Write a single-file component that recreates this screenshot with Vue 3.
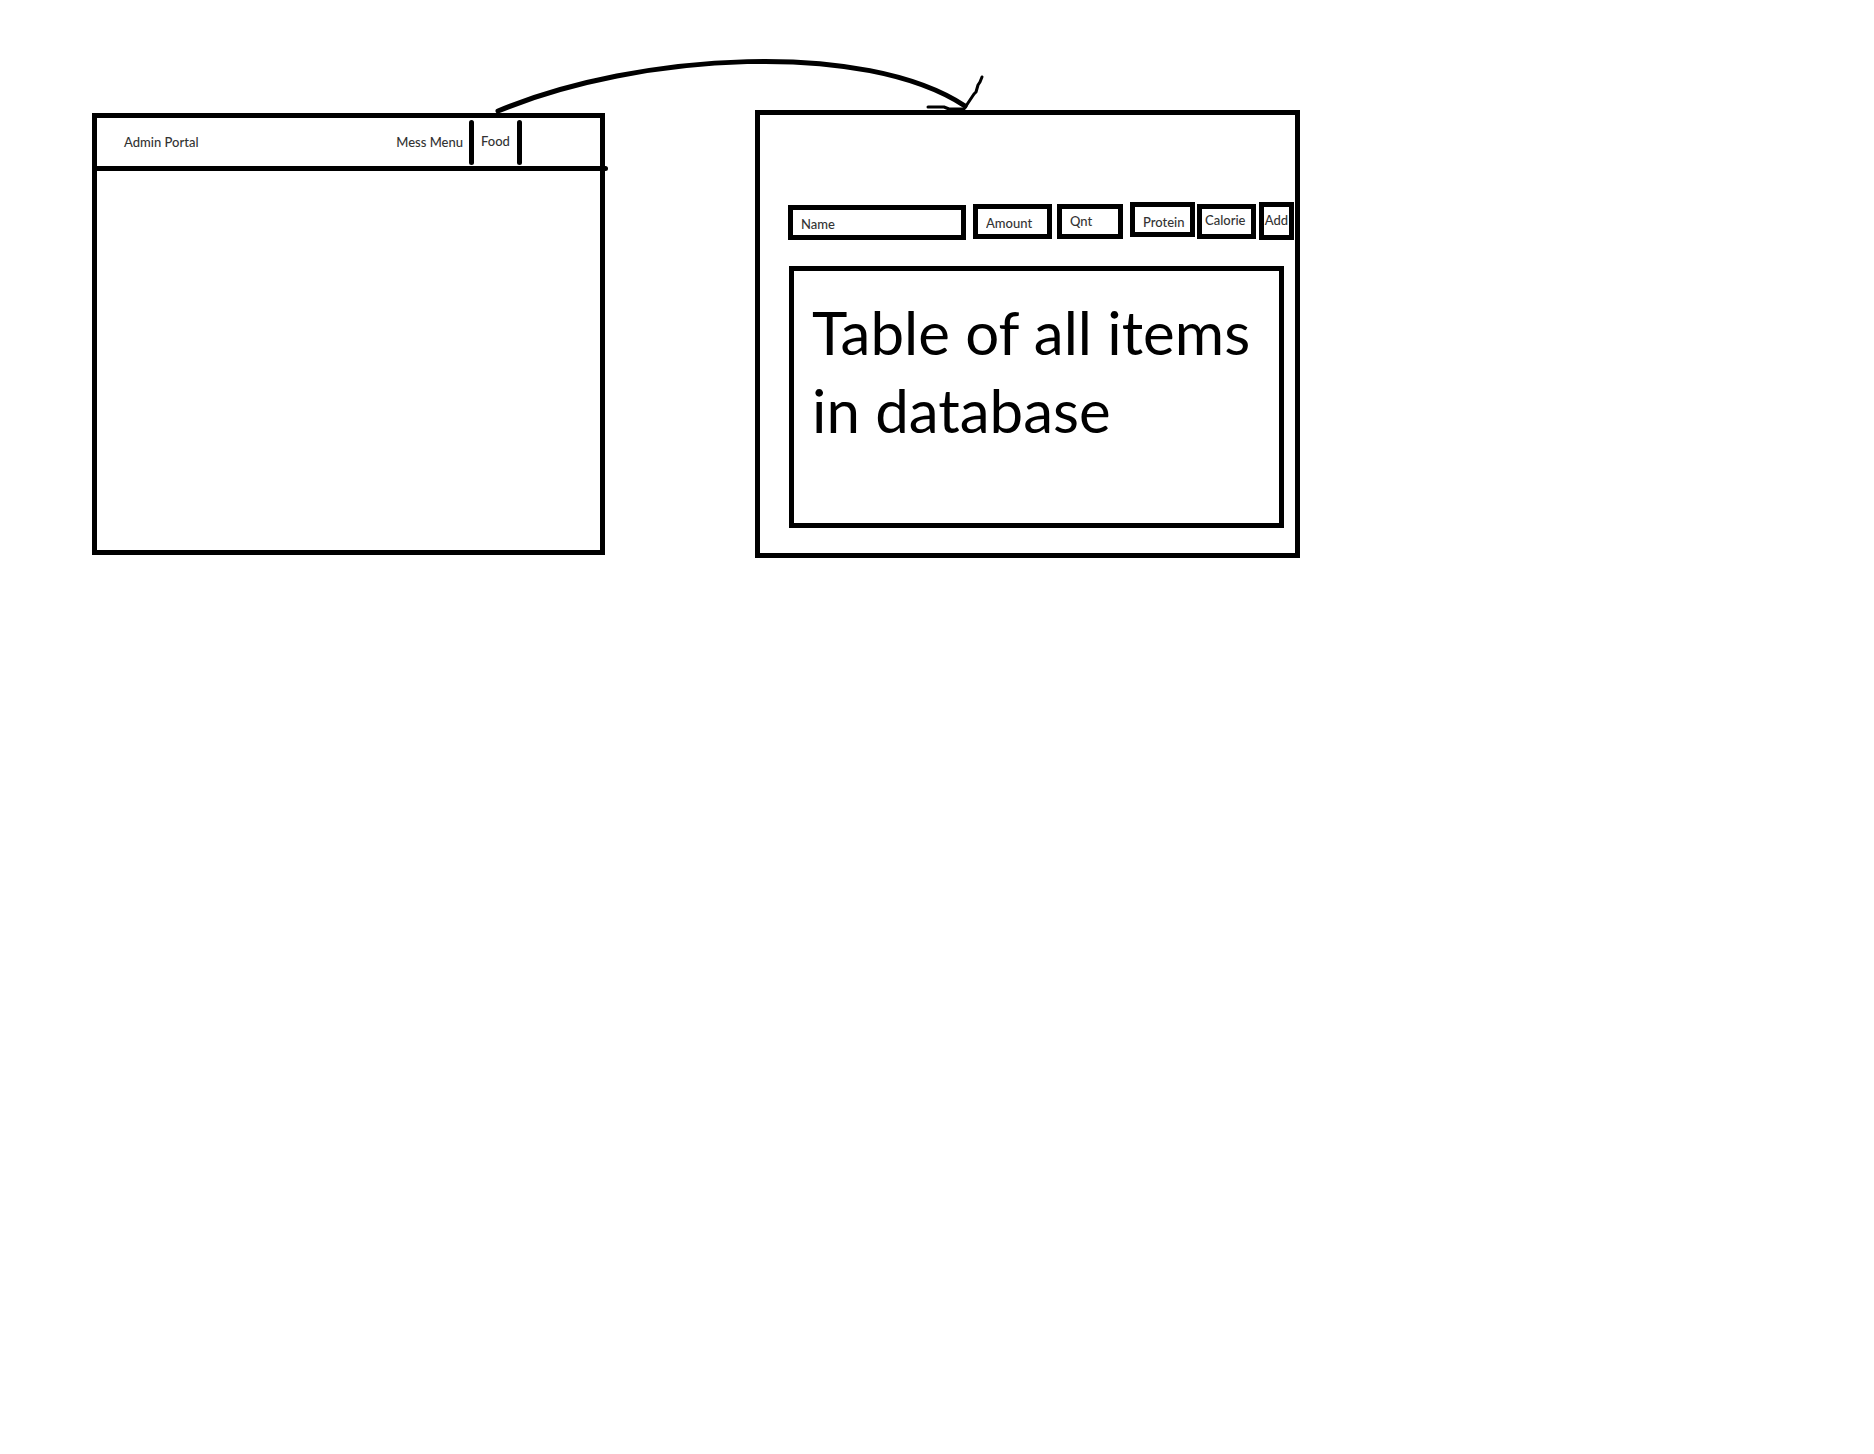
<script setup>
const fields = [
  { id: 'name', label: 'Name', kind: 'field-name low' },
  { id: 'amount', label: 'Amount', kind: 'field-amount low' },
  { id: 'qnt', label: 'Qnt', kind: 'field-qnt' },
  { id: 'protein', label: 'Protein', kind: 'field-protein' },
  { id: 'calorie', label: 'Calorie', kind: 'field-calorie' },
]
</script>

<template>
  <main class="board">
    <svg class="arrow" viewBox="0 0 1874 130" preserveAspectRatio="none" aria-hidden="true">
      <path class="curve" d="M498 111C640 52 865 40 965 106" />
      <path class="tip" d="M928 107H944L949 109H964L974 94L976 92L978 85L980 82L982 77" />
    </svg>

    <section class="panel portal">
      <header class="bar">
        <span class="brand">Admin Portal</span>
        <nav class="nav">
          <a href="#mess-menu">Mess Menu</a>
          <a href="#food" class="food">Food</a>
        </nav>
      </header>
    </section>

    <section class="panel items">
      <form class="entry" @submit.prevent>
        <input
          v-for="f in fields"
          :id="f.id"
          :key="f.id"
          type="text"
          class="field"
          :class="f.kind"
          :placeholder="f.label"
          :aria-label="f.label"
        />
        <button type="submit" class="add">Add</button>
      </form>
      <div class="listing">
        <p>Table of all items in database</p>
      </div>
    </section>
  </main>
</template>

<style>
body {
  margin: 0;
  background: #fff;
}
</style>

<style scoped>
.board {
  position: relative;
  display: grid;
  grid-template-columns:
    minmax(0, 92fr) minmax(0, 513fr) minmax(0, 150fr)
    minmax(0, 545fr) minmax(0, 574fr);
  align-items: start;
  padding: 110px 0 48px;
  font-family: Lato, Carlito, Calibri, sans-serif;
  font-size: 13px;
  font-weight: 500;
  line-height: 16px;
  color: #333;
}

.board *,
.board *::before,
.board *::after {
  box-sizing: border-box;
}

.arrow {
  position: absolute;
  top: 0;
  left: 0;
  width: 100%;
  height: 130px;
  fill: none;
  stroke: #000;
  stroke-linecap: round;
  stroke-linejoin: round;
  pointer-events: none;
}

.curve {
  stroke-width: 5;
}

.tip {
  stroke-width: 3;
}

.panel {
  border: 5px solid #000;
}

.portal {
  grid-column: 2;
  min-height: 442px;
  margin-top: 3px;
}

.bar {
  position: relative;
  display: flex;
  align-items: center;
  justify-content: space-between;
  height: 53px;
  padding: 0 78px 0 27px;
  border-bottom: 5px solid #000;
  white-space: nowrap;
}

.bar::after {
  content: '';
  position: absolute;
  right: -8px;
  bottom: -5px;
  width: 12px;
  height: 5px;
  border-radius: 3px;
  background: #000;
}

.nav {
  display: flex;
  align-items: center;
  gap: 6px;
}

.nav a {
  color: inherit;
  text-decoration: none;
}

.nav .food {
  position: relative;
  display: flex;
  align-items: center;
  justify-content: center;
  width: 53px;
  height: 46px;
  padding-bottom: 3px;
}

.food::before,
.food::after {
  content: '';
  position: absolute;
  top: 1px;
  bottom: 0;
  width: 5px;
  border-radius: 3px;
  background: #000;
}

.food::before {
  left: 0;
}

.food::after {
  right: 0;
}

.items {
  grid-column: 4;
  min-height: 448px;
  padding: 87px 1px 25px 28px;
}

.entry {
  display: flex;
  align-items: center;
  height: 38px;
}

.field,
.add {
  min-width: 0;
  height: 35px;
  margin: 0;
  padding: 0 0 0 8px;
  border: 5px solid #000;
  border-radius: 0;
  background: #fff;
  color: #333;
  font: inherit;
}

.field::placeholder {
  color: #333;
  opacity: 1;
}

.low {
  padding-top: 3px;
}

.field-name {
  flex: 178 1 178px;
  align-self: flex-end;
  margin-right: 7px;
}

.field-amount {
  flex: 79 1 79px;
  margin-right: 5px;
}

.field-qnt {
  flex: 66 1 66px;
  margin-right: 7px;
}

.field-protein {
  flex: 65 1 65px;
  align-self: flex-start;
  padding-top: 5px;
  margin-right: 2px;
}

.field-calorie {
  flex: 59 1 59px;
  margin-right: 3px;
  padding: 0 0 3px 3px;
}

.add {
  flex: 35 1 35px;
  height: 38px;
  padding: 0 0 2px;
}

.listing {
  min-height: 262px;
  margin: 26px 10px 0 1px;
  padding: 22px 12px 22px 18px;
  border: 5px solid #000;
  color: #000;
  font-size: 60px;
  font-weight: 400;
  line-height: 78px;
}

.listing p {
  margin: 0;
}
</style>
